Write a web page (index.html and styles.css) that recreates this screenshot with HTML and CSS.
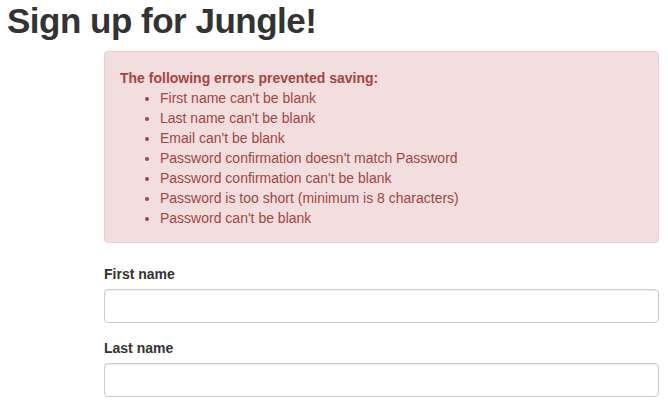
FILE: index.html
```html
<!DOCTYPE html>
<html>
<head>
<meta charset="utf-8">
<link rel="stylesheet" href="styles.css">
</head>
<body>
<h1 class="title">Sign up for Jungle!</h1>
<div class="form-col">
  <div class="alert">
    <div class="alert-head">The following errors prevented saving:</div>
    <ul class="errors">
      <li>First name can't be blank</li>
      <li>Last name can't be blank</li>
      <li>Email can't be blank</li>
      <li>Password confirmation doesn't match Password</li>
      <li>Password confirmation can't be blank</li>
      <li>Password is too short (minimum is 8 characters)</li>
      <li>Password can't be blank</li>
    </ul>
  </div>
  <div class="group">
    <label class="label" for="fn">First name</label>
    <input class="input" id="fn" type="text">
  </div>
  <div class="group">
    <label class="label" for="ln">Last name</label>
    <input class="input" id="ln" type="text">
  </div>
</div>
</body>
</html>
```
FILE: styles.css
```css
* { box-sizing: border-box; }
html, body { margin: 0; padding: 0; background: #fff; }
body {
  font-family: "Liberation Sans", Arial, sans-serif;
  font-size: 14px;
  line-height: 20px;
  color: #333;
  overflow: hidden;
}
.title {
  margin: 0 0 10px 0;
  padding: 1px 0 0 7px;
  font-size: 35px;
  font-weight: bold;
  letter-spacing: -0.5px;
  line-height: 40px;
  color: #333;
}
.form-col {
  margin-left: 104px;
  width: 555px;
}
.alert {
  background: #f2dede;
  border: 1px solid #ebccd1;
  border-radius: 4px;
  color: #a94442;
  padding: 15px 14px 14px 15px;
  margin-bottom: 21px;
}
.alert-head {
  font-weight: bold;
  margin-top: 1px;
}
.errors {
  margin: 0;
  padding-left: 40px;
}
.group { margin-bottom: 15px; }
.label {
  display: block;
  font-weight: bold;
  margin-bottom: 5px;
}
.input {
  display: block;
  width: 100%;
  height: 34px;
  border: 1px solid #ccc;
  border-radius: 4px;
  box-shadow: inset 0 1px 1px rgba(0,0,0,.075);
  background: #fff;
  font: inherit;
  padding: 6px 12px;
}
```
